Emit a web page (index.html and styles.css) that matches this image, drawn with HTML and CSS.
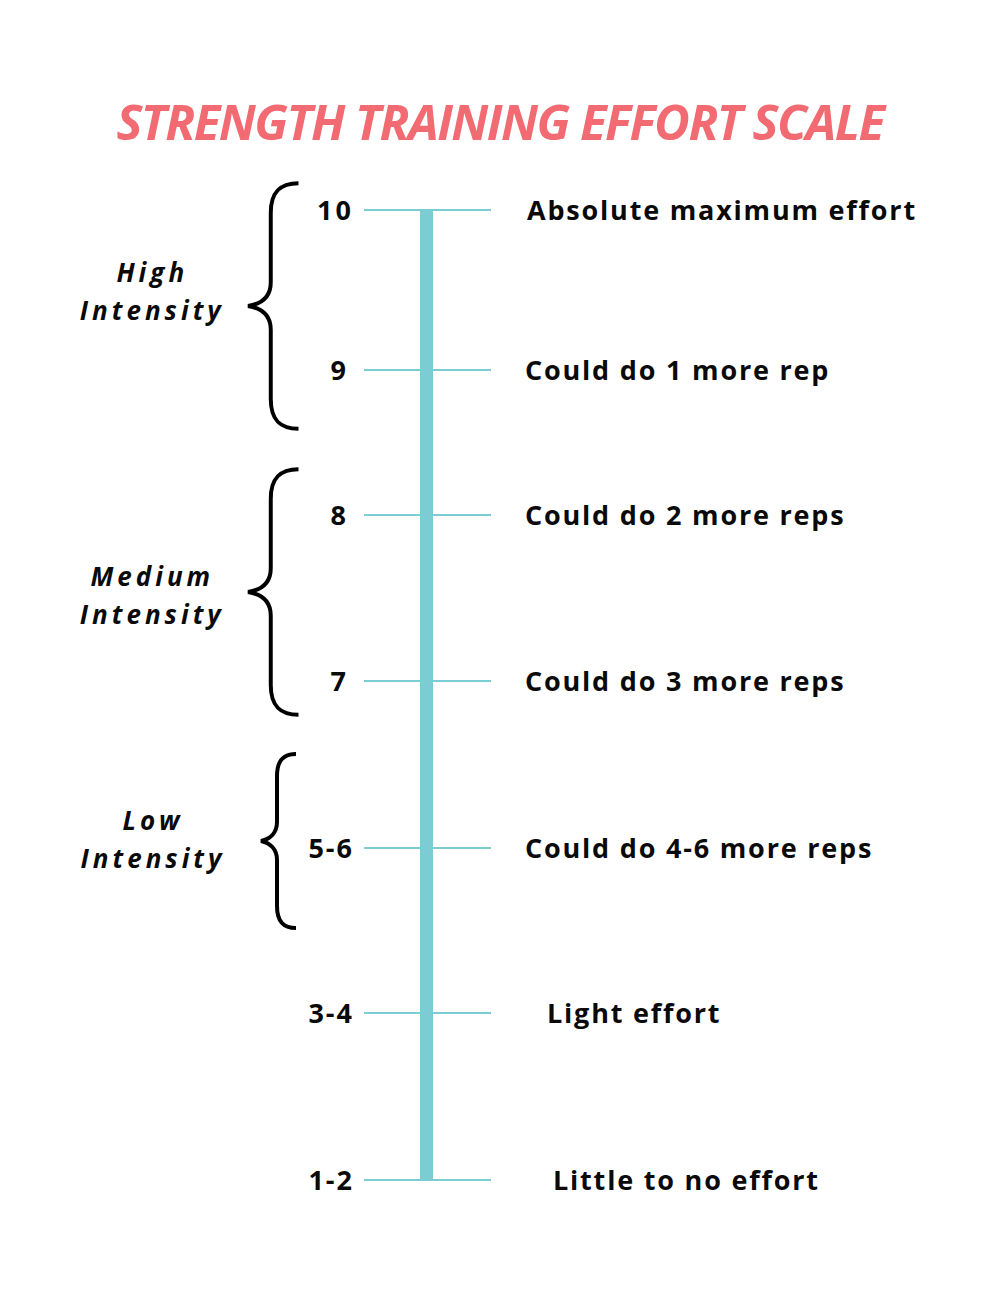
FILE: index.html
```html
<!DOCTYPE html>
<html lang="en">
<head>
<meta charset="utf-8">
<title>Strength Training Effort Scale</title>
<link rel="stylesheet" href="styles.css">
</head>
<body>
<div class="page">
  <h1 class="title">STRENGTH TRAINING EFFORT SCALE</h1>
  <div class="scale">
    <div class="groups">
      <div class="group group-high">
        <div class="label label-high">High<br>Intensity</div>
        <svg class="brace" width="54" height="252" viewBox="0 0 54 252">
          <path d="M52,2 C34,2 24,10 24,32 L24,102 C24,117 14,124 1,126 C14,128 24,135 24,150 L24,220 C24,242 34,250 52,250" />
        </svg>
      </div>
      <div class="group group-medium">
        <div class="label label-medium">Medium<br>Intensity</div>
        <svg class="brace" width="54" height="252" viewBox="0 0 54 252">
          <path d="M52,2 C34,2 24,10 24,32 L24,102 C24,117 14,124 1,126 C14,128 24,135 24,150 L24,220 C24,242 34,250 52,250" />
        </svg>
      </div>
      <div class="group group-low">
        <div class="label label-low">Low<br>Intensity</div>
        <svg class="brace brace-low" width="38" height="178" viewBox="0 0 38 178">
          <path d="M36,2 C24,2 17,8 17,24 L17,70 C17,81 10,87 1,89 C10,91 17,97 17,108 L17,154 C17,170 24,176 36,176" />
        </svg>
      </div>
    </div>
    <div class="rows">
      <div class="row"><span class="num num-ten">10</span><span class="tick"></span><span class="desc desc-a">Absolute maximum effort</span></div>
      <div class="row"><span class="num num-single">9</span><span class="tick"></span><span class="desc">Could do 1 more rep</span></div>
      <div class="row"><span class="num num-single">8</span><span class="tick"></span><span class="desc">Could do 2 more reps</span></div>
      <div class="row"><span class="num num-single">7</span><span class="tick"></span><span class="desc">Could do 3 more reps</span></div>
      <div class="row"><span class="num">5-6</span><span class="tick"></span><span class="desc">Could do 4-6 more reps</span></div>
      <div class="row"><span class="num">3-4</span><span class="tick"></span><span class="desc desc-light">Light effort</span></div>
      <div class="row"><span class="num">1-2</span><span class="tick"></span><span class="desc desc-little">Little to no effort</span></div>
    </div>
    <div class="bar"></div>
  </div>
</div>
</body>
</html>
```
FILE: styles.css
```css
* { box-sizing: border-box; }
html, body {
  margin: 0;
  padding: 0;
  background: #ffffff;
}
body {
  font-family: "Open Sans", "DejaVu Sans", sans-serif;
  color: #0a0a0a;
}
.page {
  width: 1000px;
  height: 1294px;
  overflow: hidden;
}
.title {
  margin: 0;
  padding-top: 97px;
  font-size: 49px;
  line-height: 49px;
  font-weight: 700;
  font-style: italic;
  color: #f26a72;
  text-align: center;
  letter-spacing: -1.5px;
}
.scale {
  position: relative;
  margin-top: 34px;
  display: flex;
}
.groups {
  width: 300px;
  display: flex;
  flex-direction: column;
  gap: 34px;
}
.group {
  display: flex;
  align-items: center;
  padding-left: 78px;
}
.label {
  width: 150px;
  margin-right: 20px;
  text-align: center;
  font-size: 26px;
  line-height: 38px;
  font-weight: 700;
  font-style: italic;
  letter-spacing: 4px;
}
.label-high { margin-bottom: 30px; }
.label-medium { margin-bottom: -6px; }
.label-low { margin-bottom: 4px; }
.brace path {
  fill: none;
  stroke: #000;
  stroke-width: 4;
}
.brace-low { margin-left: 12px; }
.rows {
  display: flex;
  flex-direction: column;
}
.row {
  height: 60px;
  display: flex;
  align-items: center;
}
.row:nth-child(2) { margin-top: 100px; }
.row:nth-child(3) { margin-top: 85px; }
.row:nth-child(4) { margin-top: 106px; }
.row:nth-child(5) { margin-top: 107px; }
.row:nth-child(6) { margin-top: 105px; }
.row:nth-child(7) { margin-top: 107px; }
.num {
  width: 54px;
  text-align: right;
  font-size: 27px;
  line-height: 60px;
  font-weight: 700;
  letter-spacing: 2px;
}
.num-ten { letter-spacing: 3px; padding-right: 0; }
.num-single { padding-right: 6px; }
.tick {
  width: 127px;
  height: 2px;
  margin-left: 10px;
  background: #7bccd3;
}
.desc {
  margin-left: 34px;
  font-size: 27px;
  line-height: 60px;
  font-weight: 700;
  letter-spacing: 1.8px;
  white-space: nowrap;
}
.desc-a { margin-left: 36px; }
.desc-light { margin-left: 56px; }
.desc-little { margin-left: 62px; }
.bar {
  position: absolute;
  left: 420px;
  top: 30px;
  width: 13px;
  height: 971px;
  background: #7bccd3;
}
```
